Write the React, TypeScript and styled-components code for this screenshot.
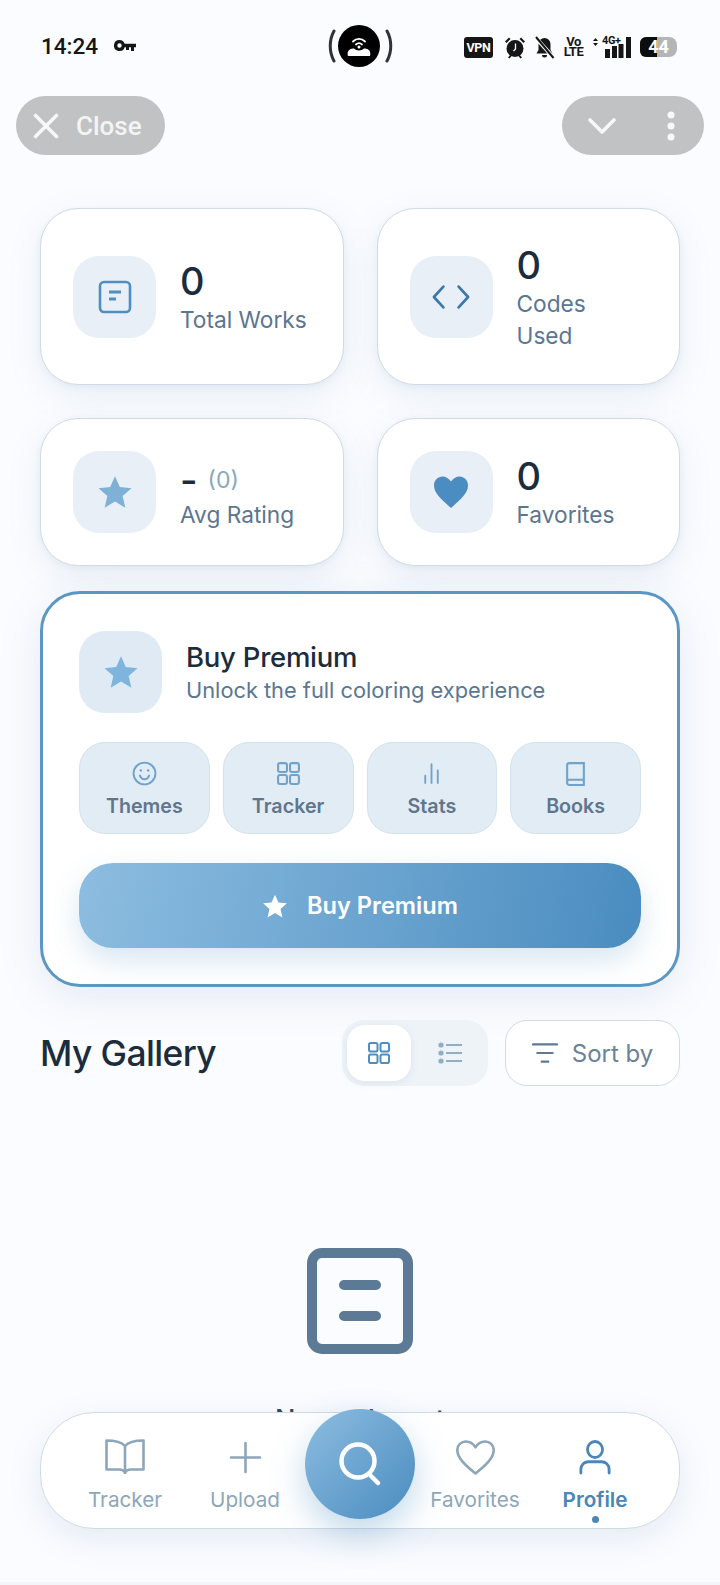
import * as React from 'react';
import styled, { createGlobalStyle } from 'styled-components';

const GlobalStyle = createGlobalStyle`
  html, body {
    margin: 0;
    padding: 0;
    background: #fbfcff;
  }
  * {
    box-sizing: border-box;
  }
`;

const Page = styled.div`
  position: relative;
  width: 720px;
  height: 1585px;
  overflow: hidden;
  background: #fbfcff;
  font-family: Inter, "Liberation Sans", sans-serif;
`;

/* status bar */
const StatusBar = styled.div`
  height: 96px;
  padding: 0 43px 0 41px;
  display: grid;
  grid-template-columns: 1fr auto 1fr;
  align-items: start;
  color: #161616;
  font-family: Roboto, "Liberation Sans", sans-serif;
`;

const StatusLeft = styled.div`
  display: flex;
  align-items: center;
  gap: 16px;
  height: 32px;
  margin-top: 30px;
`;

const Clock = styled.span`
  font-size: 22.5px;
  font-weight: 500;
  line-height: 32px;
`;

const Hotspot = styled.div`
  display: flex;
  align-items: center;
  gap: 5px;
  margin-top: 25px;
`;

const HotspotDisc = styled.div`
  width: 42px;
  height: 42px;
  border-radius: 50%;
  background: #000;
  display: flex;
  align-items: center;
  justify-content: center;
`;

const LeftBracket = styled.svg`
  margin: 0 -3px 0 3px;
`;

const StatusRight = styled.div`
  display: flex;
  align-items: center;
  justify-content: flex-end;
  height: 24px;
  margin-top: 35px;
`;

const VpnBadge = styled.span`
  width: 29px;
  height: 21px;
  background: #161616;
  border-radius: 3px;
  color: #fff;
  font-size: 12.5px;
  font-weight: 700;
  letter-spacing: -0.3px;
  line-height: 21px;
  text-align: center;
  margin-right: 11px;
`;

const VoLte = styled.span`
  display: flex;
  flex-direction: column;
  align-items: center;
  width: 19px;
  margin: 0 10px 0 9px;
  font-size: 13px;
  font-weight: 700;
  line-height: 10.5px;
  letter-spacing: -0.4px;
`;

const SignalBlock = styled.div`
  position: relative;
  width: 38px;
  height: 24px;
  margin-right: 9px;
`;

const FourG = styled.span`
  position: absolute;
  left: 9px;
  top: 0;
  font-size: 11px;
  font-weight: 700;
  line-height: 11px;
  letter-spacing: -0.4px;
`;

const Battery = styled.div`
  position: relative;
  width: 37px;
  height: 20px;
  border-radius: 6px 8px 8px 6px;
  overflow: hidden;
  background: #b4b5b6;
  color: #fff;
  font-size: 18px;
  font-weight: 700;
  line-height: 20px;
  text-align: center;
`;

const BatteryFill = styled.div`
  position: absolute;
  left: 0;
  top: 0;
  bottom: 0;
  width: 17px;
  background: #0d0d0d;
`;

const BatteryText = styled.span`
  position: relative;
`;

/* close / menu pills */
const TopBar = styled.div`
  display: flex;
  justify-content: space-between;
  padding: 0 16px;
  margin-bottom: 53px;
`;

const Pill = styled.div<{ $width: number }>`
  width: ${(props) => props.$width}px;
  height: 59px;
  border-radius: 30px;
  background: #c1c2c4;
  color: #f4f4f4;
  display: flex;
  align-items: center;
`;

const CloseLabel = styled.span`
  font-family: Roboto, "Liberation Sans", sans-serif;
  font-size: 26px;
  font-weight: 500;
  margin-left: 17px;
`;

/* main content */
const Content = styled.main`
  padding: 0 40px;
`;

const StatsGrid = styled.div`
  display: grid;
  grid-template-columns: 1fr 1fr;
  grid-template-rows: 177px 148px;
  gap: 33px;
`;

const StatCard = styled.div`
  background: #fff;
  border: 1px solid #cfdbe6;
  border-radius: 38px;
  padding: 0 32px;
  display: flex;
  align-items: center;
  gap: 24px;
  box-shadow: 0 2px 6px rgba(88, 130, 170, 0.07), 0 10px 34px rgba(88, 130, 170, 0.12);
`;

const IconTile = styled.div<{ $strong?: boolean }>`
  flex: none;
  width: 83px;
  height: 82px;
  border-radius: 26px;
  background: ${(props) => (props.$strong ? '#dfeaf4' : '#e9eff7')};
  display: flex;
  align-items: center;
  justify-content: center;
`;

const StatText = styled.div`
  display: flex;
  flex-direction: column;
`;

const StatValue = styled.div`
  display: flex;
  align-items: center;
  font-size: 38px;
  font-weight: 500;
  line-height: 46px;
  color: #1b2c3d;
`;

const RatingDash = styled.span`
  padding-top: 8px;
  line-height: 38px;
`;

const RatingCount = styled.span`
  padding-top: 8px;
  font-size: 23px;
  font-weight: 400;
  line-height: 28px;
  color: #8aa8bf;
  margin-left: 10px;
`;

const StatLabel = styled.div`
  font-size: 22.7px;
  line-height: 32px;
  color: #5a7691;
`;

const PremiumCard = styled.section`
  margin-top: 25px;
  background: #fff;
  border: 3px solid #5b97c3;
  border-radius: 40px;
  padding: 37px 36px 36px;
  box-shadow: 0 10px 44px rgba(88, 130, 170, 0.14);
`;

const PremiumHead = styled.div`
  display: flex;
  align-items: center;
  gap: 24px;
`;

const PremiumText = styled.div`
  padding-top: 4px;
`;

const PremiumTitle = styled.div`
  font-size: 27.5px;
  font-weight: 500;
  line-height: 33px;
  letter-spacing: -0.25px;
  color: #1b2c3d;
`;

const PremiumSub = styled.div`
  font-size: 21.8px;
  line-height: 33px;
  color: #5a7691;
`;

const FeatureRow = styled.div`
  margin-top: 29px;
  display: grid;
  grid-template-columns: repeat(4, 1fr);
  gap: 13px;
`;

const FeatureTile = styled.div`
  height: 92px;
  border-radius: 26px;
  background: #e1ecf5;
  border: 1px solid #d4e2ed;
  display: flex;
  flex-direction: column;
  align-items: center;
  padding-top: 18px;
  gap: 7px;
`;

const FeatureLabel = styled.span`
  font-size: 19.7px;
  font-weight: 600;
  line-height: 26px;
  color: #5f768d;
`;

const BuyButton = styled.div`
  margin-top: 29px;
  height: 85px;
  border-radius: 34px;
  background: linear-gradient(100deg, #8dbde0 0%, #4a8cc0 100%);
  box-shadow: 0 12px 28px rgba(74, 140, 192, 0.22);
  display: flex;
  align-items: center;
  justify-content: center;
  gap: 19px;
  color: #fff;
  font-size: 23.6px;
  font-weight: 600;
`;

const GalleryHead = styled.div`
  margin-top: 33px;
  display: flex;
  align-items: center;
`;

const GalleryTitle = styled.h2`
  margin: 0 auto 0 0;
  font-size: 35.4px;
  font-weight: 500;
  letter-spacing: -0.6px;
  color: #1b2c3d;
`;

const ViewToggle = styled.div`
  width: 146px;
  height: 66px;
  border-radius: 22px;
  background: #eef3f8;
  padding: 5px;
  display: flex;
  gap: 7px;
`;

const ToggleOption = styled.div<{ $active?: boolean }>`
  flex: none;
  width: 64px;
  border-radius: 18px;
  display: flex;
  align-items: center;
  justify-content: center;
  background: ${(props) => (props.$active ? '#fff' : 'transparent')};
  box-shadow: ${(props) => (props.$active ? '0 2px 8px rgba(88, 130, 170, 0.12)' : 'none')};
`;

const SortButton = styled.div`
  margin-left: 17px;
  width: 175px;
  height: 66px;
  border: 1px solid #cfdbe6;
  border-radius: 22px;
  background: #fff;
  display: flex;
  align-items: center;
  justify-content: center;
  gap: 14px;
  font-size: 24px;
  color: #6b8299;
`;

const EmptyState = styled.div`
  margin-top: 162px;
  display: flex;
  flex-direction: column;
  align-items: center;
`;

const EmptyTitle = styled.div`
  margin-top: 49px;
  font-size: 27px;
  font-weight: 500;
  color: #33475b;
`;

/* bottom nav, floats over the page */
const BottomNav = styled.nav`
  position: absolute;
  left: 40px;
  top: 1412px;
  width: 640px;
  height: 117px;
  background: #fff;
  border: 1px solid #cfdbe6;
  border-radius: 54px;
  padding: 0 24px;
  display: grid;
  grid-template-columns: 120px 120px 110px 120px 120px;
  box-shadow: 0 10px 34px rgba(88, 130, 170, 0.14);
`;

const NavItem = styled.div<{ $active?: boolean }>`
  position: relative;
  display: flex;
  flex-direction: column;
  align-items: center;
  padding-top: 26px;
  gap: 10px;
  font-size: 20.7px;
  line-height: 28px;
  font-weight: ${(props) => (props.$active ? 600 : 400)};
  color: ${(props) => (props.$active ? '#4a86b6' : '#8da6b9')};
`;

const ActiveDot = styled.span`
  position: absolute;
  bottom: 5px;
  width: 7px;
  height: 7px;
  border-radius: 50%;
  background: #4a86b6;
`;

const SearchFab = styled.div`
  width: 110px;
  height: 110px;
  margin-top: -4px;
  border-radius: 50%;
  background: linear-gradient(135deg, #8dbde0 0%, #4a8cc0 100%);
  box-shadow: 0 14px 34px rgba(74, 140, 192, 0.34);
  display: flex;
  align-items: center;
  justify-content: center;
`;

const BottomEdge = styled.div`
  position: absolute;
  left: 0;
  right: 0;
  bottom: 0;
  height: 3px;
  background: #f4f5f9;
`;

const Star = ({ size, color }: { size: number; color: string }) => (
  <svg width={size} height={size} viewBox="0 0 24 24" fill={color}>
    <path d="M12 1.5l3.2 7.2 7.8.8-5.9 5.2 1.8 7.8L12 18.4l-6.9 4.1 1.8-7.8L1 9.5l7.8-.8z" />
  </svg>
);

const GridIcon = ({ size, color }: { size: number; color: string }) => (
  <svg width={size} height={size} viewBox="0 0 24 24" fill="none" stroke={color} strokeWidth="2">
    <rect x="2" y="2" width="8.5" height="8.5" rx="1.8" />
    <rect x="13.5" y="2" width="8.5" height="8.5" rx="1.8" />
    <rect x="2" y="13.5" width="8.5" height="8.5" rx="1.8" />
    <rect x="13.5" y="13.5" width="8.5" height="8.5" rx="1.8" />
  </svg>
);

const App = () => (
  <Page>
    <GlobalStyle />
    <StatusBar>
      <StatusLeft>
        <Clock>14:24</Clock>
        <svg width="22" height="12" viewBox="0 0 22 12" fill="#161616">
          <path d="M5.500 0a5.500 5.500 0 0 1 5.200 3.800H22v3.400h-2V11h-3V7.200h-2V10h-3V7.200h-1.300A5.500 5.500 0 1 1 5.500 0zm0 3.300a2.200 2.200 0 1 0 0 4.400 2.200 2.200 0 0 0 0-4.400z" />
        </svg>
      </StatusLeft>
      <Hotspot>
        <LeftBracket width="8" height="34" viewBox="0 0 8 34" fill="none" stroke="#333" strokeWidth="3" strokeLinecap="round">
          <path d="M6 2C1 11 1 23 6 32" />
        </LeftBracket>
        <HotspotDisc>
          <svg width="26" height="24" viewBox="0 0 26 24" fill="none">
            <path d="M7 7.500c3.500-3.500 8.500-3.500 12 0M10 10.500c2-1.800 4-1.800 6 0" stroke="#fff" strokeWidth="1.800" strokeLinecap="round" />
            <circle cx="13" cy="13" r="1.500" fill="#fff" />
            <path d="M2 22c-1.500-5 2-8 6-7.500 2 2.500 8 2.500 10 0 4-.5 7.500 2.500 6 7.500z" fill="#fff" />
          </svg>
        </HotspotDisc>
        <svg width="8" height="34" viewBox="0 0 8 34" fill="none" stroke="#333" strokeWidth="3" strokeLinecap="round">
          <path d="M2 2C7 11 7 23 2 32" />
        </svg>
      </Hotspot>
      <StatusRight>
        <VpnBadge>VPN</VpnBadge>
        <svg width="22" height="23" viewBox="0 0 22 23" fill="#161616">
          <path d="M1 5.500L5 1.500l1.500 1.500-4 4zM21 5.500l-4-4-1.500 1.500 4 4z" />
          <circle cx="11" cy="12.500" r="8.500" />
          <path d="M4 21.500l2.500-3 1.500 1-2.500 3zM18 21.500l-2.500-3-1.500 1 2.500 3z" />
          <path d="M11.500 7.500v5.500l-2 2" stroke="#fff" strokeWidth="1.300" fill="none" />
        </svg>
        <svg style={{ marginLeft: 8 }} width="21" height="23" viewBox="0 0 21 23" fill="#161616">
          <path d="M10.500 2a6 6 0 0 1 6 6v6l2 3.500h-16l2-3.500V8a6 6 0 0 1 6-6z" />
          <path d="M8 19h5a2.500 2.500 0 0 1-5 0z" />
          <path d="M1.500 1.500l18 20" stroke="#fbfcff" strokeWidth="4" />
          <path d="M2 1l17.500 21" stroke="#161616" strokeWidth="2" />
        </svg>
        <VoLte>
          <span>Vo</span>
          <span>LTE</span>
        </VoLte>
        <SignalBlock>
          <svg width="38" height="24" viewBox="0 0 38 24" fill="#161616">
            <path d="M2.500 3l2.500 3H0zM2.500 11L0 8h5z" />
            <rect x="12" y="14" width="5" height="9" />
            <rect x="19" y="11" width="5" height="12" />
            <rect x="25.500" y="9" width="5" height="14" />
            <rect x="33" y="2" width="5" height="21" />
          </svg>
          <FourG>4G+</FourG>
        </SignalBlock>
        <Battery>
          <BatteryFill />
          <BatteryText>44</BatteryText>
        </Battery>
      </StatusRight>
    </StatusBar>

    <TopBar>
      <Pill $width={149}>
        <svg style={{ marginLeft: 17 }} width="26" height="26" viewBox="0 0 26 26" fill="none" stroke="#f8f8f8" strokeWidth="3.600" strokeLinecap="round">
          <path d="M2.500 2.500l21 21M23.500 2.500l-21 21" />
        </svg>
        <CloseLabel>Close</CloseLabel>
      </Pill>
      <Pill $width={142}>
        <svg style={{ marginLeft: 26 }} width="28" height="18" viewBox="0 0 28 18" fill="none" stroke="#f8f8f8" strokeWidth="3.600" strokeLinecap="round" strokeLinejoin="round">
          <path d="M2 3l12 12L26 3" />
        </svg>
        <svg style={{ marginLeft: 51 }} width="8" height="30" viewBox="0 0 8 30" fill="#f8f8f8">
          <circle cx="4" cy="4" r="3.500" />
          <circle cx="4" cy="15" r="3.500" />
          <circle cx="4" cy="26" r="3.500" />
        </svg>
      </Pill>
    </TopBar>

    <Content>
      <StatsGrid>
        <StatCard>
          <IconTile>
            <svg width="34" height="34" viewBox="0 0 34 34" fill="none" stroke="#4f8ebf" strokeWidth="2.600">
              <rect x="2" y="2" width="30" height="30" rx="4" />
              <path d="M11 12h12M11 19h7" strokeWidth="3" />
            </svg>
          </IconTile>
          <StatText>
            <StatValue>0</StatValue>
            <StatLabel>Total Works</StatLabel>
          </StatText>
        </StatCard>
        <StatCard>
          <IconTile>
            <svg width="38" height="26" viewBox="0 0 40 26" fill="none" stroke="#3c78a8" strokeWidth="2.800" strokeLinecap="round" strokeLinejoin="round">
              <path d="M12 2L2 13l10 11M28 2l10 11-10 11" />
            </svg>
          </IconTile>
          <StatText>
            <StatValue>0</StatValue>
            <StatLabel>
              Codes
              <br />
              Used
            </StatLabel>
          </StatText>
        </StatCard>
        <StatCard>
          <IconTile>
            <Star size={36} color="#7fb1d6" />
          </IconTile>
          <StatText>
            <StatValue>
              <RatingDash>-</RatingDash>
              <RatingCount>(0)</RatingCount>
            </StatValue>
            <StatLabel>Avg Rating</StatLabel>
          </StatText>
        </StatCard>
        <StatCard>
          <IconTile>
            <svg width="36" height="32" viewBox="0 0 36 32" fill="#4c8dc1">
              <path d="M18 32C8 23 1 17 1 9.500 1 4 5 .5 9.500.5c3.500 0 6.500 2 8.500 5 2-3 5-5 8.500-5C31 .5 35 4 35 9.500 35 17 28 23 18 32z" />
            </svg>
          </IconTile>
          <StatText>
            <StatValue>0</StatValue>
            <StatLabel>Favorites</StatLabel>
          </StatText>
        </StatCard>
      </StatsGrid>

      <PremiumCard>
        <PremiumHead>
          <IconTile $strong>
            <Star size={36} color="#7fb5dc" />
          </IconTile>
          <PremiumText>
            <PremiumTitle>Buy Premium</PremiumTitle>
            <PremiumSub>Unlock the full coloring experience</PremiumSub>
          </PremiumText>
        </PremiumHead>
        <FeatureRow>
          <FeatureTile>
            <svg width="25" height="25" viewBox="0 0 24 24" fill="none" stroke="#6fa3cc" strokeWidth="1.800" strokeLinecap="round">
              <circle cx="12" cy="12" r="10.500" />
              <path d="M7.500 14c1 2.500 2.800 3.500 4.500 3.500s3.500-1 4.500-3.500" />
              <path d="M8.500 9h.01M15.500 9h.01" strokeWidth="2.400" />
            </svg>
            <FeatureLabel>Themes</FeatureLabel>
          </FeatureTile>
          <FeatureTile>
            <GridIcon size={25} color="#6fa3cc" />
            <FeatureLabel>Tracker</FeatureLabel>
          </FeatureTile>
          <FeatureTile>
            <svg width="25" height="25" viewBox="0 0 24 24" fill="none" stroke="#6fa3cc" strokeWidth="1.800" strokeLinecap="round">
              <path d="M6 21v-7M12 21V3M18 21V9" />
            </svg>
            <FeatureLabel>Stats</FeatureLabel>
          </FeatureTile>
          <FeatureTile>
            <svg width="25" height="25" viewBox="0 0 24 24" fill="none" stroke="#6fa3cc" strokeWidth="2">
              <path d="M4 19.500V4a2 2 0 0 1 2-2h14v21H6a2 2 0 0 1-2-2.500 2 2 0 0 1 2-2.500h14" />
            </svg>
            <FeatureLabel>Books</FeatureLabel>
          </FeatureTile>
        </FeatureRow>
        <BuyButton>
          <Star size={26} color="#fff" />
          <span>Buy Premium</span>
        </BuyButton>
      </PremiumCard>

      <GalleryHead>
        <GalleryTitle>My Gallery</GalleryTitle>
        <ViewToggle>
          <ToggleOption $active>
            <GridIcon size={24} color="#4f8ebf" />
          </ToggleOption>
          <ToggleOption>
            <svg width="24" height="22" viewBox="0 0 24 22" fill="none" stroke="#93adc3" strokeWidth="2">
              <path d="M8 3h16M8 11h16M8 19h16" />
              <circle cx="3" cy="3" r="2.600" fill="#93adc3" stroke="none" />
              <circle cx="3" cy="11" r="2.600" fill="#93adc3" stroke="none" />
              <circle cx="3" cy="19" r="2.600" fill="#93adc3" stroke="none" />
            </svg>
          </ToggleOption>
        </ViewToggle>
        <SortButton>
          <svg width="26" height="22" viewBox="0 0 27 22" fill="none" stroke="#5f7a92" strokeWidth="2.200" strokeLinecap="round">
            <path d="M1 2h25M5.500 11h16M10 20h7" />
          </svg>
          <span>Sort by</span>
        </SortButton>
      </GalleryHead>

      <EmptyState>
        <svg width="106" height="106" viewBox="0 0 106 106" fill="none" stroke="#5c7a95" strokeWidth="10" strokeLinecap="round">
          <rect x="5" y="5" width="96" height="96" rx="10" />
          <path d="M37 37h32M37 68h32" />
        </svg>
        <EmptyTitle>No works yet</EmptyTitle>
      </EmptyState>
    </Content>

    <BottomNav>
      <NavItem>
        <svg width="40" height="37" viewBox="0 0 40 37" fill="none" stroke="#8da6b9" strokeWidth="2.600" strokeLinejoin="round">
          <path d="M20 7C16 2.500 9 1.500 1.500 1.500v29H14c3 0 5 1 6 3 1-2 3-3 6-3h12.500v-29C31 1.500 24 2.500 20 7zM20 7v28" />
        </svg>
        <span>Tracker</span>
      </NavItem>
      <NavItem>
        <svg width="37" height="37" viewBox="0 0 37 37" fill="none" stroke="#8da6b9" strokeWidth="2.600" strokeLinecap="round">
          <path d="M18.500 4v29M4 18.500h29" />
        </svg>
        <span>Upload</span>
      </NavItem>
      <SearchFab>
        <svg width="44" height="46" viewBox="0 0 44 46" fill="none" stroke="#fff" strokeWidth="4.500" strokeLinecap="round">
          <circle cx="20" cy="20" r="16.500" />
          <path d="M33 35l7 7" />
        </svg>
      </SearchFab>
      <NavItem>
        <svg width="41" height="37" viewBox="0 0 36 32" fill="none" stroke="#8da6b9" strokeWidth="2.300" strokeLinejoin="round">
          <path d="M18 30C8 22 2 16 2 9.500 2 5 5.500 2 9.500 2c3.500 0 6.500 2 8.500 5 2-3 5-5 8.500-5C30.500 2 34 5 34 9.500 34 16 28 22 18 30z" />
        </svg>
        <span>Favorites</span>
      </NavItem>
      <NavItem $active>
        <svg width="32" height="37" viewBox="0 0 34 37" fill="none" stroke="#4a86b6" strokeWidth="3" strokeLinecap="round">
          <ellipse cx="17" cy="10" rx="8" ry="8.500" />
          <path d="M2 35v-4c0-5 4-8 8-8h14c4 0 8 3 8 8v4" />
        </svg>
        <span>Profile</span>
        <ActiveDot />
      </NavItem>
    </BottomNav>
    <BottomEdge />
  </Page>
);

export default App;
